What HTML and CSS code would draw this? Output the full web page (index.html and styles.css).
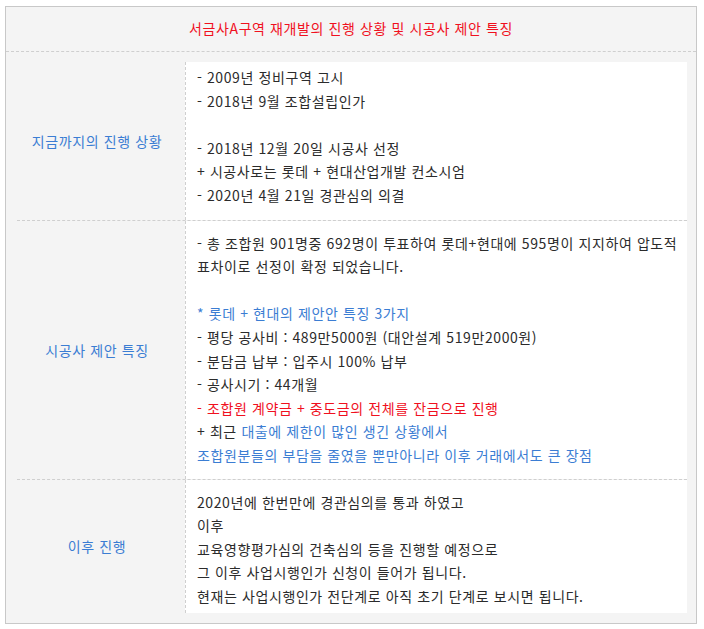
FILE: index.html
```html
<!DOCTYPE html>
<html lang="ko">
<head>
<meta charset="utf-8">
<title>서금사A구역 재개발</title>
<link rel="stylesheet" href="styles.css">
</head>
<body>
<div class="box">
  <div class="title">서금사A구역 재개발의 진행 상황 및 시공사 제안 특징</div>
  <div class="body">
    <div class="row row-first">
      <div class="label">지금까지의 진행 상황</div>
      <div class="cell">
        <div>- 2009년 정비구역 고시</div>
        <div>- 2018년 9월 조합설립인가</div>
        <div class="blank">&nbsp;</div>
        <div>- 2018년 12월 20일 시공사 선정</div>
        <div>+ 시공사로는 롯데 + 현대산업개발 컨소시엄</div>
        <div>- 2020년 4월 21일 경관심의 의결</div>
      </div>
    </div>
    <div class="row">
      <div class="label">시공사 제안 특징</div>
      <div class="cell">
        <div>- 총 조합원 901명중 692명이 투표하여 롯데+현대에 595명이 지지하여 압도적 표차이로 선정이 확정 되었습니다.</div>
        <div class="blank">&nbsp;</div>
        <div class="blue">* 롯데 + 현대의 제안안 특징 3가지</div>
        <div>- 평당 공사비 : 489만5000원 (대안설계 519만2000원)</div>
        <div>- 분담금 납부 : 입주시 100% 납부</div>
        <div>- 공사시기 : 44개월</div>
        <div class="red">- 조합원 계약금 + 중도금의 전체를 잔금으로 진행</div>
        <div>+ 최근 <span class="blue">대출에 제한이 많인 생긴 상황에서</span></div>
        <div class="blue">조합원분들의 부담을 줄였을 뿐만아니라 이후 거래에서도 큰 장점</div>
      </div>
    </div>
    <div class="row row-last">
      <div class="label">이후 진행</div>
      <div class="cell">
        <div>2020년에 한번만에 경관심의를 통과 하였고</div>
        <div>이후</div>
        <div>교육영향평가심의 건축심의 등을 진행할 예정으로</div>
        <div>그 이후 사업시행인가 신청이 들어가 됩니다.</div>
        <div>현재는 사업시행인가 전단계로 아직 초기 단계로 보시면 됩니다.</div>
      </div>
    </div>
  </div>
</div>
</body>
</html>
```
FILE: styles.css
```css
html, body {
  margin: 0;
  padding: 0;
  background: #ffffff;
}
body {
  font-family: "Noto Sans CJK KR", "Noto Sans", sans-serif;
  font-size: 14px;
  color: #2b2b2b;
  letter-spacing: 0.6px;
}
.box {
  margin: 6px 7px 0 5px;
  border: 1px solid #c8c8c8;
  background: #f4f4f4;
}
.title {
  height: 44px;
  line-height: 43px;
  text-align: center;
  color: #f0101e;
  border-bottom: 1px dashed #cfcfcf;
}
.body {
  padding: 10px 9px 10px 11px;
}
.row {
  display: grid;
  grid-template-columns: 168px 1fr;
}
.row + .row {
  border-top: 1px dashed #cfcfcf;
}
.label {
  display: flex;
  align-items: center;
  justify-content: center;
  padding-right: 8px;
  color: #3b7dd3;
}
.cell {
  background: #ffffff;
  border-left: 1px dashed #cfcfcf;
  padding: 11px 6px 11px 11px;
  line-height: 23.6px;
}
.row-first .cell {
  padding-top: 4px;
  padding-bottom: 12px;
}
.row-last .cell {
  padding-bottom: 5px;
}
.blue {
  color: #3b7dd3;
}
.red {
  color: #f0101e;
}
```
